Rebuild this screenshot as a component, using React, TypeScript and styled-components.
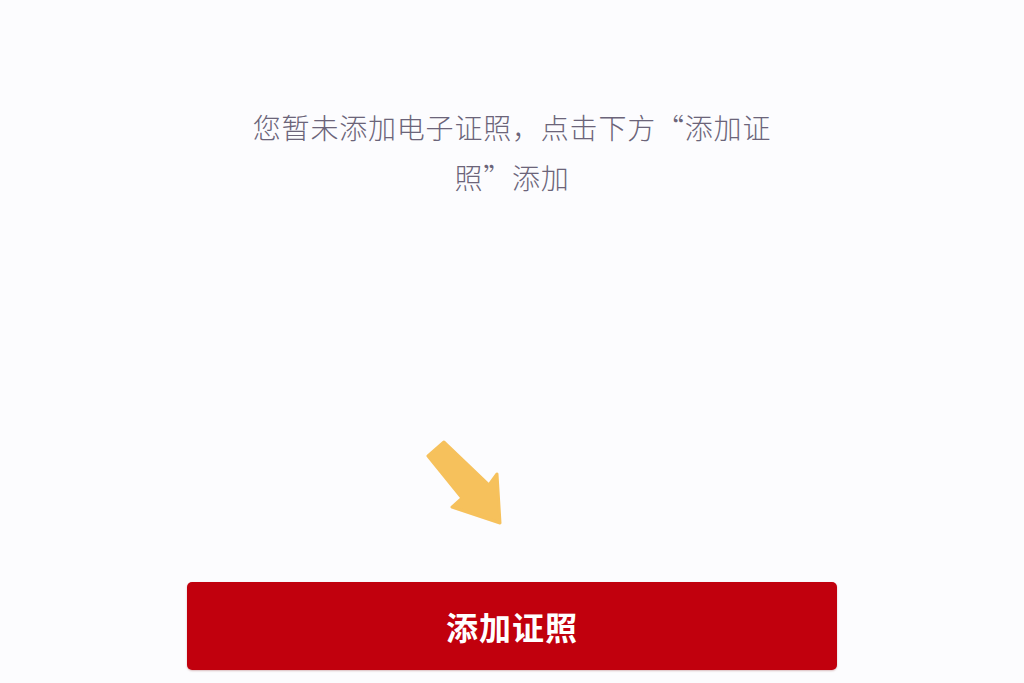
import styled, { createGlobalStyle } from 'styled-components';

const GlobalStyle = createGlobalStyle`
  html, body {
    margin: 0;
    padding: 0;
    background: #fcfcfe;
  }
  body {
    font-family: "Noto Sans CJK SC", "Noto Sans", sans-serif;
  }
`;

const Page = styled.div`
  height: 683px;
  display: flex;
  flex-direction: column;
  align-items: center;
  box-sizing: border-box;
  padding: 102px 0 13px;
`;

const Message = styled.p`
  margin: 0;
  width: 526px;
  text-align: center;
  font-size: 28px;
  line-height: 50px;
  font-weight: 300;
  color: #6b6479;
  letter-spacing: 0.8px;
`;

const Bottom = styled.div`
  margin-top: auto;
  width: 650px;
  display: flex;
  flex-direction: column;
  gap: 54px;
`;

const ArrowRow = styled.div`
  display: flex;
  padding-left: 235px;
`;

const AddButton = styled.button`
  width: 650px;
  height: 88px;
  border: none;
  border-radius: 5px;
  background: #c1000d;
  color: #ffffff;
  font-family: "Noto Sans CJK SC", sans-serif;
  font-size: 32px;
  font-weight: 700;
  letter-spacing: 1px;
  box-shadow: 0 1px 2px rgba(120, 0, 0, 0.25);
  cursor: pointer;
`;

const Arrow = () => (
  <svg width="85" height="92" viewBox="0 0 85 92">
    <polygon
      points="6,20 22,6 67,49 75,38 78,87 30,71 40,62"
      fill="#f6c15c"
      stroke="#f6c15c"
      strokeWidth="3"
      strokeLinejoin="round"
    />
  </svg>
);

export default function App() {
  return (
    <>
      <GlobalStyle />
      <Page>
        <Message>您暂未添加电子证照，点击下方“添加证照”添加</Message>
        <Bottom>
          <ArrowRow>
            <Arrow />
          </ArrowRow>
          <AddButton>添加证照</AddButton>
        </Bottom>
      </Page>
    </>
  );
}
